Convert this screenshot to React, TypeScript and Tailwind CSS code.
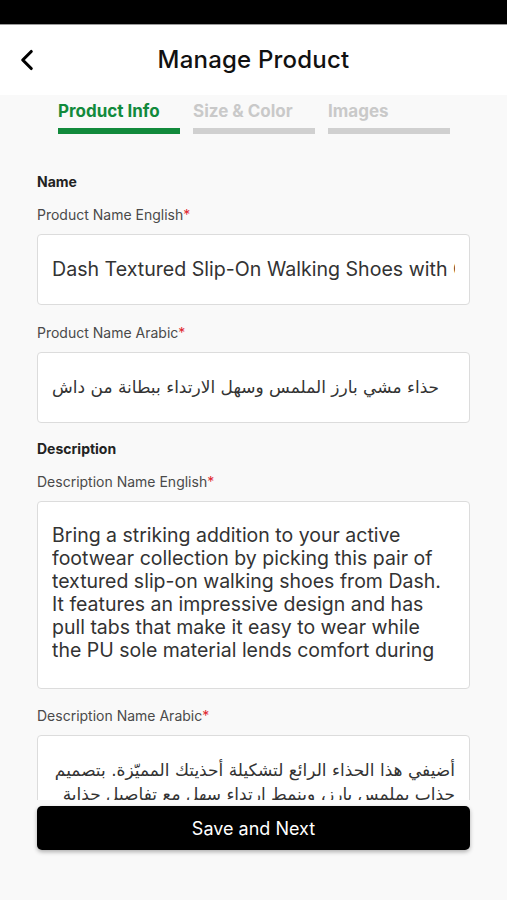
import { ChevronLeft } from 'lucide-react';

type FieldProps = {
  label: string;
  children: React.ReactNode;
};

function Label({ label }: { label: string }) {
  return (
    <p className="text-[14px] leading-[20px] text-[#4a4a4a]">
      {label}
      <span className="text-[#e0282e]">*</span>
    </p>
  );
}

function Field({ label, children }: FieldProps) {
  return (
    <div className="flex flex-col gap-[9px]">
      <Label label={label} />
      {children}
    </div>
  );
}

function Tab({ label, active }: { label: string; active?: boolean }) {
  return (
    <div className="w-[122px] flex flex-col gap-[6px]">
      <span
        className={`text-[17px] leading-[22px] font-bold whitespace-nowrap ${
          active ? 'text-[#128a3c]' : 'text-[#c9c9c9]'
        }`}
      >
        {label}
      </span>
      <div className={`h-[6px] ${active ? 'bg-[#128a3c]' : 'bg-[#d0d0d0]'}`} />
    </div>
  );
}

export default function App() {
  return (
    <div className="h-screen flex flex-col bg-[#f9f9f9] font-['Inter','Noto_Sans',sans-serif] overflow-hidden">
      {/* STATUS BAR */}
      <div className="h-[25px] shrink-0 bg-black border-b border-[#9a9a9a]" />

      {/* HEADER */}
      <header className="relative h-[70px] shrink-0 bg-white flex items-center justify-center">
        <ChevronLeft size={34} strokeWidth={2.2} className="absolute left-[10px] top-[18px] text-black" />
        <h1 className="text-[24px] font-medium text-[#111] tracking-[0.2px]">Manage Product</h1>
      </header>

      {/* CONTENT */}
      <main className="flex-1 overflow-hidden">
        <div className="flex gap-[13px] pl-[58px] pt-[5px]">
          <Tab label="Product Info" active />
          <Tab label="Size & Color" />
          <Tab label="Images" />
        </div>

        <div className="px-[37px] pt-[38px] flex flex-col">
          <h2 className="text-[14px] leading-[20px] font-bold text-[#222]">Name</h2>

          <div className="mt-[13px] flex flex-col gap-[18px]">
            <Field label="Product Name English">
              <div className="h-[71px] bg-white border border-[#dcdcdc] rounded-[4px] px-[14px] flex items-center">
                <div className="w-full overflow-hidden">
                  <span className="text-[19.6px] text-[#333] whitespace-nowrap">
                    Dash Textured Slip-On Walking Shoes with Contrast Pull Tabs
                  </span>
                </div>
              </div>
            </Field>

            <Field label="Product Name Arabic">
              <div className="h-[71px] bg-white border border-[#dcdcdc] rounded-[4px] px-[14px] flex items-center">
                <div className="w-full overflow-hidden">
                  <span
                    dir="rtl"
                    className="inline-block text-[17px] text-[#333] whitespace-nowrap font-['DejaVu_Sans','Noto_Sans',sans-serif]"
                  >
                    حذاء مشي بارز الملمس وسهل الارتداء ببطانة من داش
                  </span>
                </div>
              </div>
            </Field>
          </div>

          <h2 className="mt-[16px] text-[14px] leading-[20px] font-bold text-[#222]">Description</h2>

          <div className="mt-[13px] flex flex-col gap-[17px]">
            <Field label="Description Name English">
              <div className="h-[188px] bg-white border border-[#dcdcdc] rounded-[4px] pl-[14px] pr-[20px] pt-[22px] overflow-hidden">
                <p className="h-[138px] overflow-hidden text-[19.5px] leading-[23px] text-[#333]">
                  Bring a striking addition to your active footwear collection by picking this pair of
                  textured slip-on walking shoes from Dash. It features an impressive design and has
                  pull tabs that make it easy to wear while the PU sole material lends comfort during
                  long walks. Style it with your favourite joggers.
                </p>
              </div>
            </Field>

            <Field label="Description Name Arabic">
              <div className="h-[188px] bg-white border border-[#dcdcdc] rounded-[4px] px-[14px] pt-[22px] overflow-hidden">
                <p
                  dir="rtl"
                  className="h-[44px] overflow-hidden text-[17px] leading-[24px] text-[#333] font-['DejaVu_Sans','Noto_Sans',sans-serif]"
                >
                  أضيفي هذا الحذاء الرائع لتشكيلة أحذيتك المميّزة. بتصميم جذاب بملمس بارز، وبنمط ارتداء سهل مع تفاصيل جذابة
                  تسهّل الارتداء ونعل من البولي يوريثان المريح.
                </p>
              </div>
            </Field>
          </div>
        </div>
      </main>

      {/* FOOTER */}
      <footer className="shrink-0 px-[37px] pt-[6px] pb-[50px] bg-[#f9f9f9]">
        <button className="w-full h-[44px] rounded-[5px] bg-black text-white text-[18px] shadow-[0_2px_4px_rgba(0,0,0,0.3)]">
          Save and Next
        </button>
      </footer>
    </div>
  );
}
